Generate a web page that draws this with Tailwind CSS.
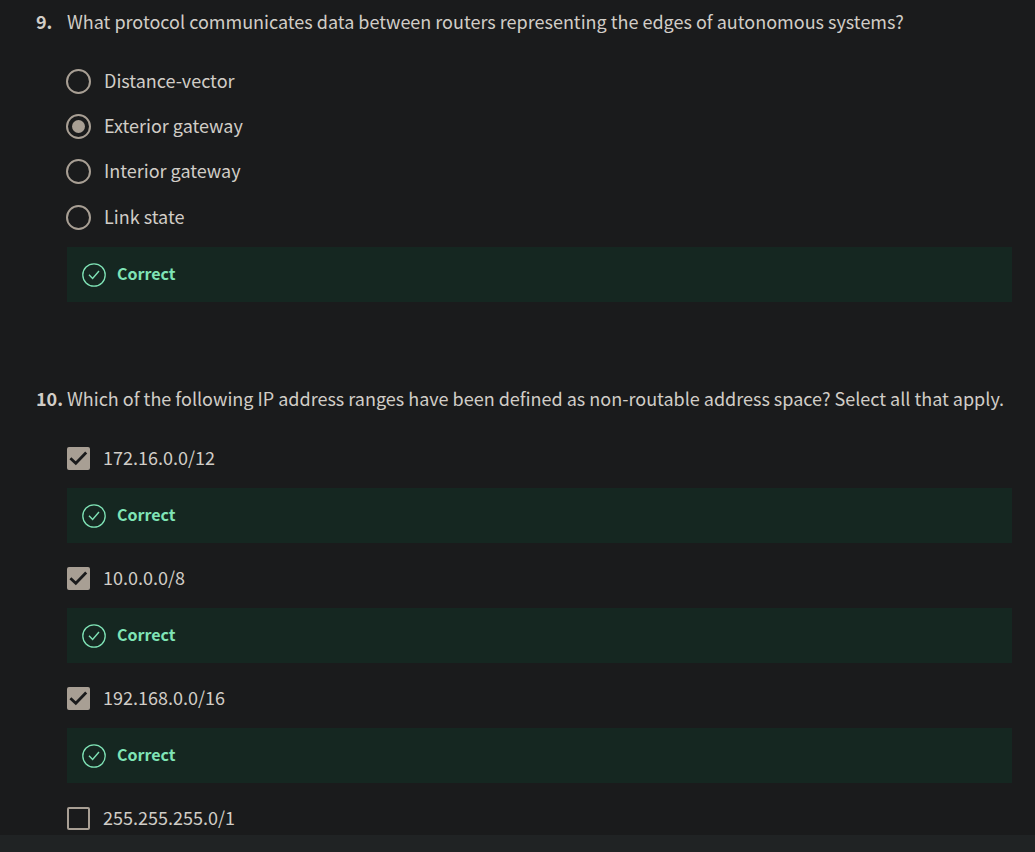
<!DOCTYPE html>
<html lang="en">
<head>
<meta charset="utf-8">
<meta name="viewport" content="width=device-width, initial-scale=1">
<title>Quiz feedback</title>
<script src="https://cdn.jsdelivr.net/npm/@tailwindcss/browser@4"></script>
</head>
<body class="flex h-screen flex-col overflow-hidden bg-[#1a1b1c] font-['Noto_Sans_CJK_SC',sans-serif] text-[18px] leading-7 text-[#d1cdc7]">
<svg class="hidden" aria-hidden="true">
  <symbol id="correct" viewBox="0 0 24 24">
    <circle cx="12" cy="12" r="11.2" fill="none" stroke="currentColor" stroke-width="1.3"/>
    <path d="M7 11.8 L10.6 15.4 L17 8" fill="none" stroke="currentColor" stroke-width="1.4"/>
  </symbol>
  <symbol id="tick" viewBox="0 0 23 23">
    <path d="M3.4 11.2 L8.8 16.2 L19.2 5.6" fill="none" stroke="currentColor" stroke-width="2.8"/>
  </symbol>
</svg>
<main class="min-h-0 flex-1 overflow-hidden pl-9 pr-[23px] pt-[7px]">
  <section aria-labelledby="q9">
    <div class="flex">
      <span class="w-[31px] shrink-0 font-bold">9.</span>
      <h2 id="q9">What protocol communicates data between routers representing the edges of autonomous systems?</h2>
    </div>
    <div class="pl-[31px] pt-6">
      <label class="flex h-[45px] items-center gap-[13px]"><input type="radio" name="protocol" class="-ml-px size-[25px] shrink-0 appearance-none rounded-full border-2 border-[#a89f94] p-1 checked:bg-[#a89f94] checked:bg-clip-content"><span class="pb-[3px]">Distance-vector</span></label>
      <label class="flex h-[45px] items-center gap-[13px]"><input type="radio" name="protocol" checked class="-ml-px size-[25px] shrink-0 appearance-none rounded-full border-2 border-[#a89f94] p-1 checked:bg-[#a89f94] checked:bg-clip-content"><span class="pb-[3px]">Exterior gateway</span></label>
      <label class="flex h-[45px] items-center gap-[13px]"><input type="radio" name="protocol" class="-ml-px size-[25px] shrink-0 appearance-none rounded-full border-2 border-[#a89f94] p-1 checked:bg-[#a89f94] checked:bg-clip-content"><span class="pb-[3px]">Interior gateway</span></label>
      <label class="flex h-[46px] items-center gap-[13px]"><input type="radio" name="protocol" class="-ml-px size-[25px] shrink-0 appearance-none rounded-full border-2 border-[#a89f94] p-1 checked:bg-[#a89f94] checked:bg-clip-content"><span class="pb-[3px]">Link state</span></label>
      <div class="mt-[7px] flex h-[55px] items-center gap-[11px] bg-[#152721] px-[15px] text-[16px] font-bold text-[#7fe3b6]"><svg class="size-6 shrink-0" aria-hidden="true"><use href="#correct"/></svg><span class="pb-[3px]">Correct</span></div>
    </div>
  </section>
  <section aria-labelledby="q10" class="pt-[82px]">
    <div class="flex">
      <span class="w-[31px] shrink-0 font-bold">10.</span>
      <h2 id="q10" class="-mr-3">Which of the following IP address ranges have been defined as non-routable address space? Select all that apply.</h2>
    </div>
    <div class="pl-[31px] pt-6">
      <label class="flex h-[45px] items-center gap-[13px]"><span class="relative size-[23px] shrink-0"><input type="checkbox" checked class="block size-full appearance-none rounded-xs border-2 border-[#a89f94] checked:bg-[#a89f94]"><svg class="pointer-events-none absolute inset-0 size-full text-[#1a1b1c]" aria-hidden="true"><use href="#tick"/></svg></span><span class="pb-[3px]">172.16.0.0/12</span></label>
      <div class="mt-[7px] flex h-[55px] items-center gap-[11px] bg-[#152721] px-[15px] text-[16px] font-bold text-[#7fe3b6]"><svg class="size-6 shrink-0" aria-hidden="true"><use href="#correct"/></svg><span class="pb-[3px]">Correct</span></div>
      <label class="mt-[13px] flex h-[45px] items-center gap-[13px]"><span class="relative size-[23px] shrink-0"><input type="checkbox" checked class="block size-full appearance-none rounded-xs border-2 border-[#a89f94] checked:bg-[#a89f94]"><svg class="pointer-events-none absolute inset-0 size-full text-[#1a1b1c]" aria-hidden="true"><use href="#tick"/></svg></span><span class="pb-[3px]">10.0.0.0/8</span></label>
      <div class="mt-[7px] flex h-[55px] items-center gap-[11px] bg-[#152721] px-[15px] text-[16px] font-bold text-[#7fe3b6]"><svg class="size-6 shrink-0" aria-hidden="true"><use href="#correct"/></svg><span class="pb-[3px]">Correct</span></div>
      <label class="mt-[13px] flex h-[45px] items-center gap-[13px]"><span class="relative size-[23px] shrink-0"><input type="checkbox" checked class="block size-full appearance-none rounded-xs border-2 border-[#a89f94] checked:bg-[#a89f94]"><svg class="pointer-events-none absolute inset-0 size-full text-[#1a1b1c]" aria-hidden="true"><use href="#tick"/></svg></span><span class="pb-[3px]">192.168.0.0/16</span></label>
      <div class="mt-[7px] flex h-[55px] items-center gap-[11px] bg-[#152721] px-[15px] text-[16px] font-bold text-[#7fe3b6]"><svg class="size-6 shrink-0" aria-hidden="true"><use href="#correct"/></svg><span class="pb-[3px]">Correct</span></div>
      <label class="mt-[13px] flex h-[45px] items-center gap-[13px]"><input type="checkbox" class="block size-[23px] shrink-0 appearance-none rounded-xs border-2 border-[#a89f94] checked:bg-[#a89f94]"><span class="pb-[3px]">255.255.255.0/1</span></label>
    </div>
  </section>
</main>
<footer class="h-[17px] shrink-0 bg-[#202324]"></footer>
</body>
</html>
